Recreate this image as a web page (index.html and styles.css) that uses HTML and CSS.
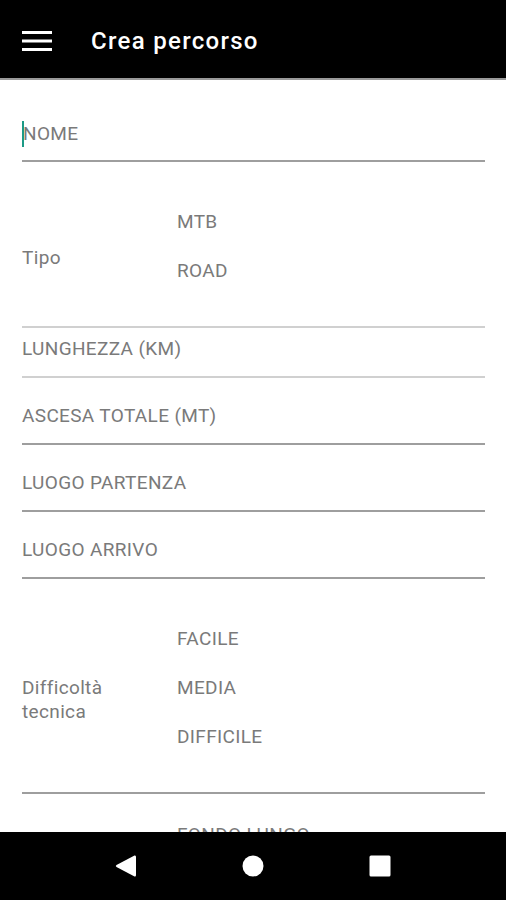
FILE: index.html
```html
<!DOCTYPE html>
<html lang="it">
<head>
<meta charset="utf-8">
<title>Crea percorso</title>
<link rel="stylesheet" href="styles.css">
</head>
<body>
<div class="screen">
  <header class="appbar">
    <svg class="menu" width="30" height="22" viewBox="0 0 30 22">
      <rect x="0" y="1" width="30" height="3" fill="#fff"/>
      <rect x="0" y="9.5" width="30" height="3" fill="#fff"/>
      <rect x="0" y="18" width="30" height="3" fill="#fff"/>
    </svg>
    <h1 class="title">Crea percorso</h1>
  </header>
  <main class="form">
    <div class="field name"><span class="cursor"></span><span class="ph">NOME</span></div>
    <div class="group tipo light">
      <div class="glabel">Tipo</div>
      <div class="options"><div class="opt">MTB</div><div class="opt">ROAD</div></div>
    </div>
    <div class="field len light"><span class="ph">LUNGHEZZA (KM)</span></div>
    <div class="field std"><span class="ph">ASCESA TOTALE (MT)</span></div>
    <div class="field std"><span class="ph">LUOGO PARTENZA</span></div>
    <div class="field std"><span class="ph">LUOGO ARRIVO</span></div>
    <div class="group diff">
      <div class="glabel">Difficoltà<br>tecnica</div>
      <div class="options"><div class="opt">FACILE</div><div class="opt">MEDIA</div><div class="opt">DIFFICILE</div></div>
    </div>
    <div class="group next">
      <div class="glabel"></div>
      <div class="options"><div class="opt">FONDO LUNGO</div></div>
    </div>
  </main>
  <nav class="navbar">
    <svg class="nav-icon" width="22" height="24" viewBox="0 0 22 24">
      <path d="M19.5 1.5 Q21 1 21 3 L21 21 Q21 23 19.5 22.5 L1.5 13 Q0 12 1.5 11 Z" fill="#fff"/>
    </svg>
    <svg class="nav-icon" width="22" height="22" viewBox="0 0 22 22">
      <circle cx="11" cy="11" r="10.5" fill="#fff"/>
    </svg>
    <svg class="nav-icon" width="22" height="22" viewBox="0 0 22 22">
      <rect x="0.5" y="0.5" width="21" height="21" rx="1.5" fill="#fff"/>
    </svg>
  </nav>
</div>
</body>
</html>
```

FILE: styles.css
```css
* { box-sizing: border-box; }
html, body { margin: 0; padding: 0; background: #000; }
body { font-family: Roboto, "Noto Sans", sans-serif; }

.screen {
  width: 506px;
  height: 900px;
  display: flex;
  flex-direction: column;
  overflow: hidden;
  background: #fff;
}

.appbar {
  flex: 0 0 80px;
  background: #000;
  border-bottom: 2px solid #9a9a9a;
  display: flex;
  align-items: center;
  padding: 3px 0 0 22px;
}
.menu { display: block; }
.title {
  margin: 0 0 0 39px;
  color: #fff;
  font-size: 24px;
  font-weight: 500;
  line-height: 28px;
  letter-spacing: 1.3px;
}

.form {
  flex: 1 1 auto;
  overflow: hidden;
  padding: 0 21px 0 22px;
  background: #fff;
  color: #7a7a7a;
  font-size: 19px;
  line-height: 20px;
  letter-spacing: 0.35px;
}

.field {
  display: flex;
  align-items: center;
  border-bottom: 2px solid #9e9e9e;
}
.field.light, .group.light { border-bottom-color: #d0d0d0; }

.name { height: 82px; padding-top: 28px; }
.cursor {
  display: inline-block;
  width: 2px;
  height: 26px;
  background: #1c9a86;
  margin-right: -1px;
}
.ph { display: block; }

.len { height: 50px; padding: 11px 0 17px; }
.std { height: 67px; padding: 28px 0 17px; }

.group {
  display: flex;
  align-items: flex-start;
  border-bottom: 2px solid #9e9e9e;
}
.glabel { width: 155px; flex: 0 0 155px; }
.options { flex: 1 1 auto; }
.opt { line-height: 49px; }

.tipo { height: 166px; padding-top: 35px; }
.tipo .glabel { padding-top: 51px; }

.diff { height: 215px; padding-top: 35px; }
.diff .glabel { padding-top: 62px; line-height: 24px; }

.next { border-bottom: none; padding-top: 16px; }

.navbar {
  flex: 0 0 68px;
  background: #000;
  display: flex;
  align-items: center;
  justify-content: center;
  gap: 105px;
}
.nav-icon { display: block; }
```
